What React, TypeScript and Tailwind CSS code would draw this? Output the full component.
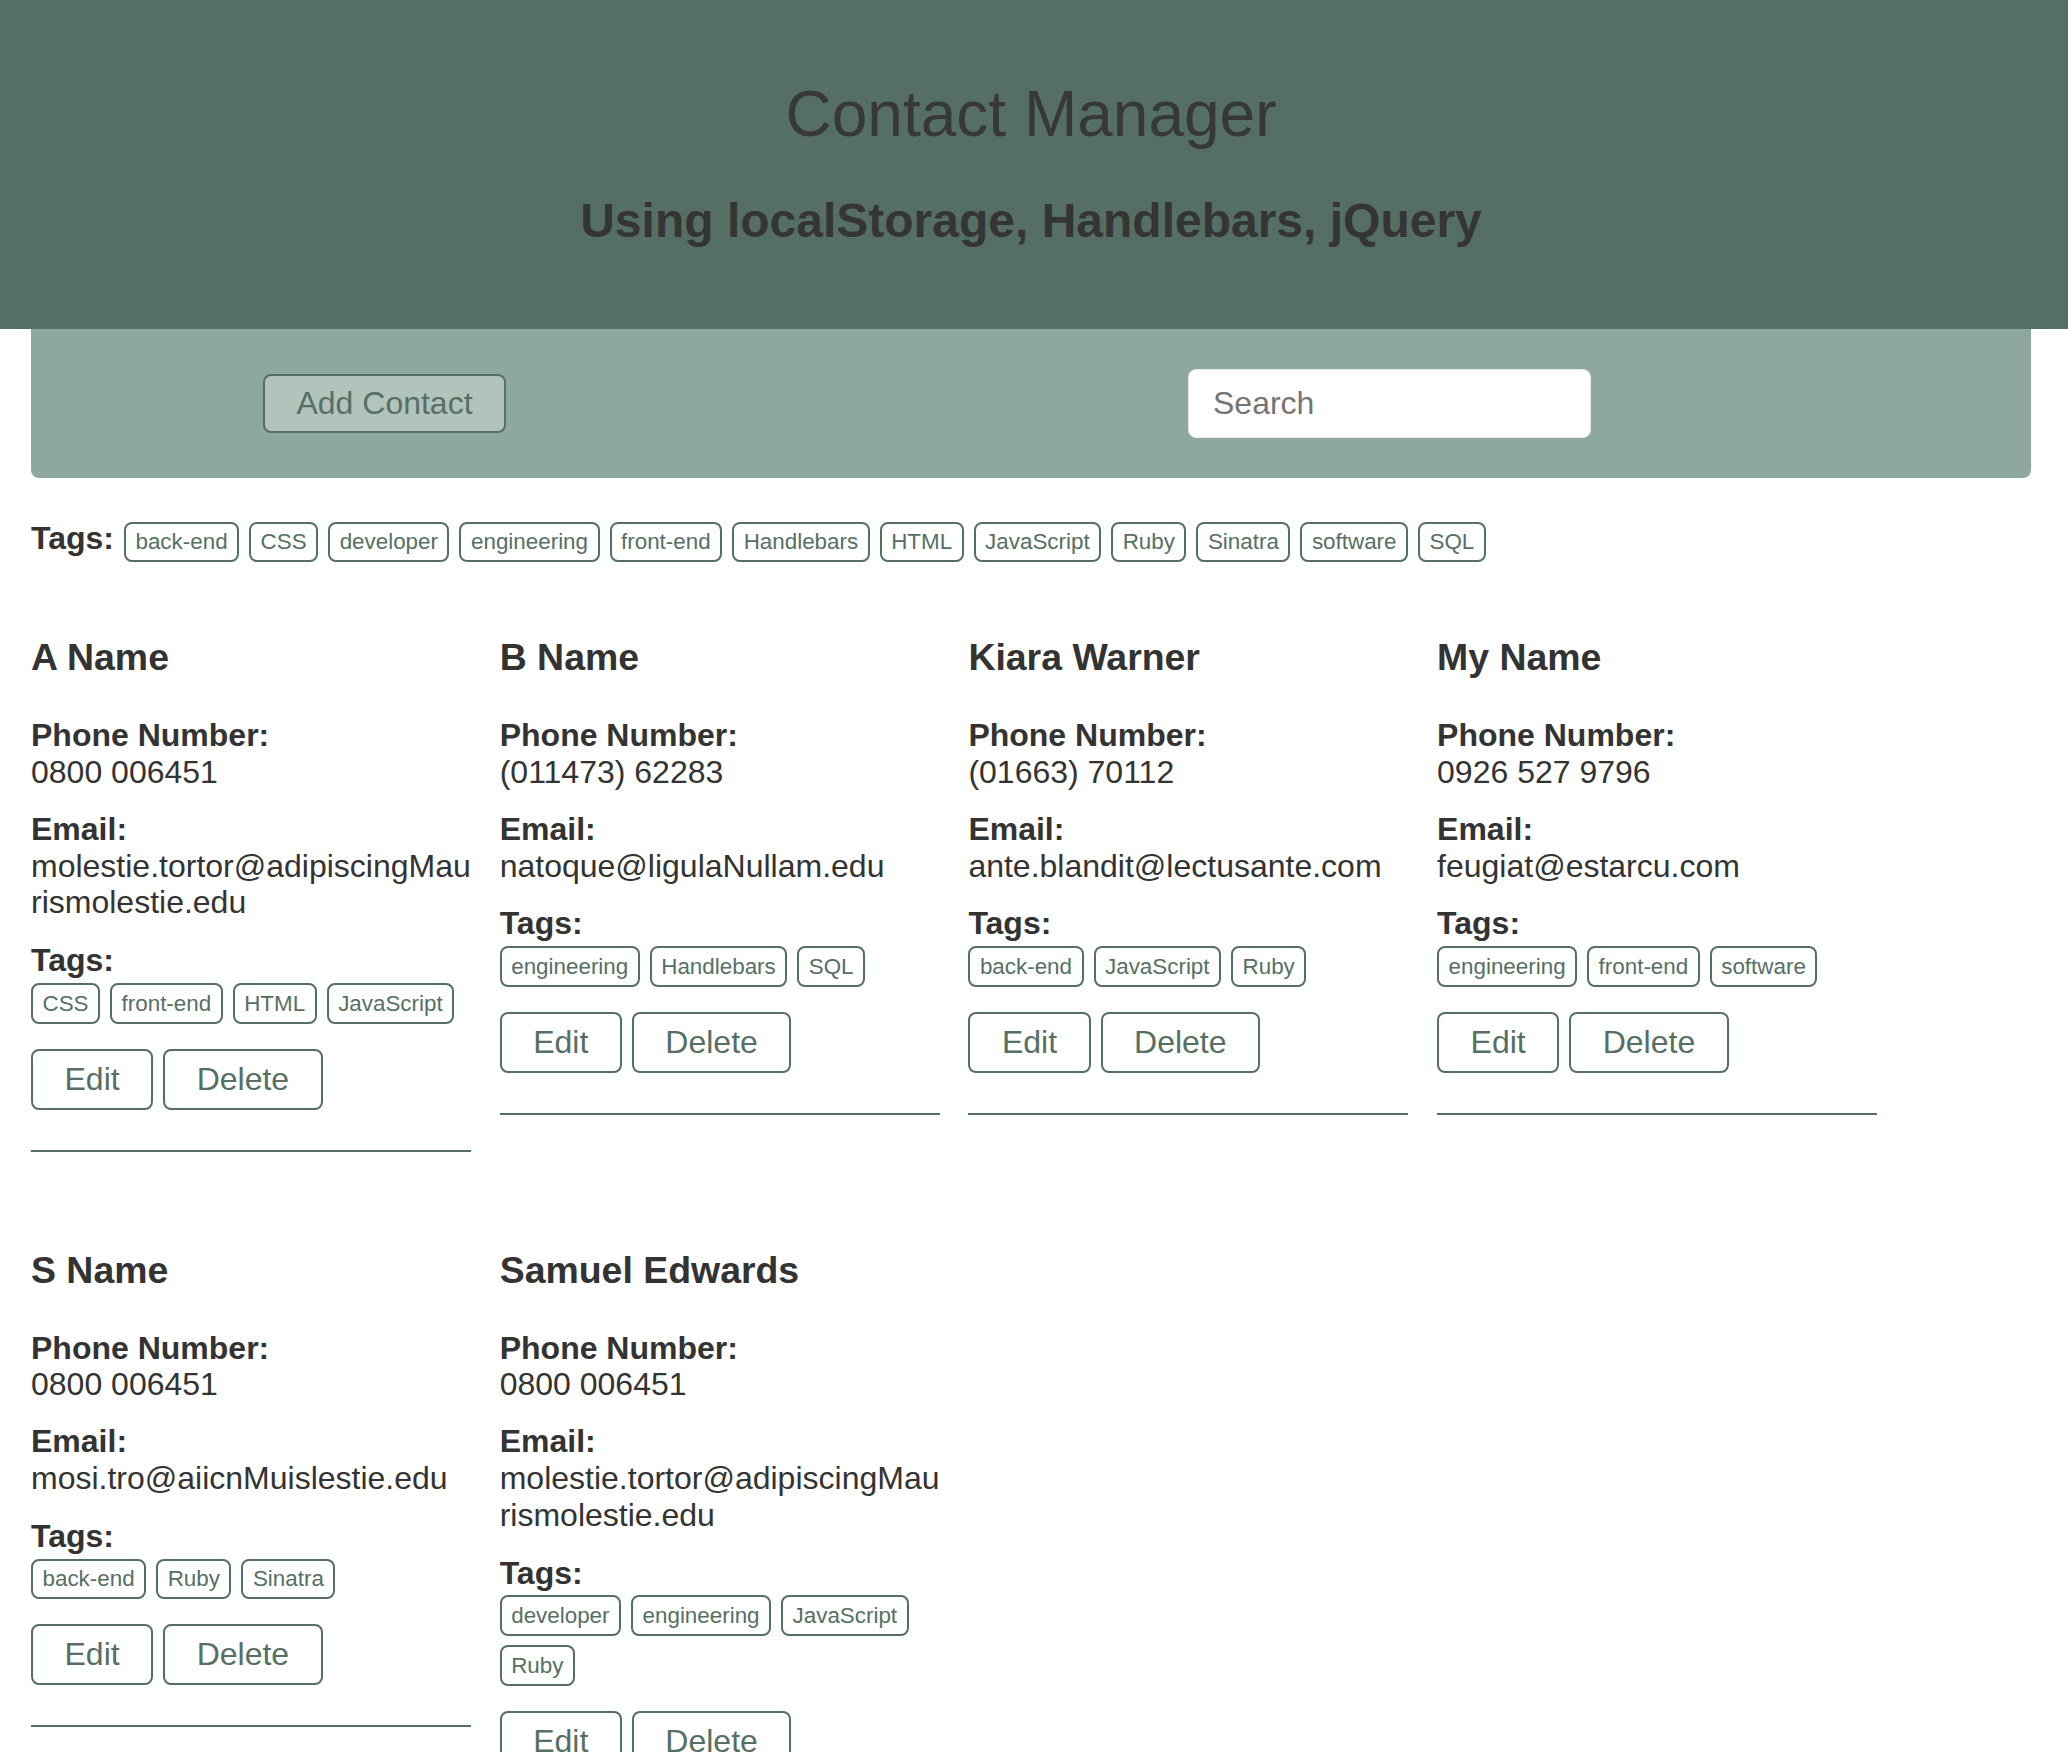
import React from 'react';

interface Contact {
  id: number;
  name: string;
  phone: string;
  email: string;
  tags: string[];
}

const allTags = [
  "back-end",
  "CSS",
  "developer",
  "engineering",
  "front-end",
  "Handlebars",
  "HTML",
  "JavaScript",
  "Ruby",
  "Sinatra",
  "software",
  "SQL",
];

const contacts: Contact[] = [
  {
    id: 1,
    name: "A Name",
    phone: "0800 006451",
    email: "molestie.tortor@adipiscingMaurismolestie.edu",
    tags: ["CSS", "front-end", "HTML", "JavaScript"],
  },
  {
    id: 2,
    name: "B Name",
    phone: "(011473) 62283",
    email: "natoque@ligulaNullam.edu",
    tags: ["engineering", "Handlebars", "SQL"],
  },
  {
    id: 3,
    name: "Kiara Warner",
    phone: "(01663) 70112",
    email: "ante.blandit@lectusante.com",
    tags: ["back-end", "JavaScript", "Ruby"],
  },
  {
    id: 4,
    name: "My Name",
    phone: "0926 527 9796",
    email: "feugiat@estarcu.com",
    tags: ["engineering", "front-end", "software"],
  },
  {
    id: 5,
    name: "S Name",
    phone: "0800 006451",
    email: "mosi.tro@aiicnMuislestie.edu",
    tags: ["back-end", "Ruby", "Sinatra"],
  },
  {
    id: 6,
    name: "Samuel Edwards",
    phone: "0800 006451",
    email: "molestie.tortor@adipiscingMaurismolestie.edu",
    tags: ["developer", "engineering", "JavaScript", "Ruby"],
  },
];

const Tag = ({ label }: { label: string }) => (
  <span className="inline-block rounded-[8px] border-2 border-[#566f65] bg-white px-[9.5px] py-[5.5px] text-[22.4px] leading-[25.76px] text-[#566f65]">
    {label}
  </span>
);

const CardButton = ({ label }: { label: string }) => (
  <button className="rounded-[8px] border-2 border-[#566f65] bg-white px-[31.5px] py-[10px] text-[32px] leading-[36.8px] text-[#566f65]">
    {label}
  </button>
);

const ContactCard = ({ contact }: { contact: Contact }) => (
  <div className="w-[440px]">
    <h3 className="text-[37.44px] font-bold leading-[43px]">{contact.name}</h3>
    <div className="mt-[38px]">
      <div className="font-bold">Phone Number:</div>
      <div>{contact.phone}</div>
    </div>
    <div className="mt-[20px]">
      <div className="font-bold">Email:</div>
      <div className="break-words">{contact.email}</div>
    </div>
    <div className="mt-[21px] font-bold">Tags:</div>
    <div className="mt-[4px] flex flex-wrap gap-x-[10px] gap-y-[9.3px]">
      {contact.tags.map((t) => (
        <Tag key={t} label={t} />
      ))}
    </div>
    <div className="mt-[25px] flex gap-[10px]">
      <CardButton label="Edit" />
      <CardButton label="Delete" />
    </div>
    <hr className="mt-[40px] border-t-2 border-[#566f65]" />
  </div>
);

const App = () => {
  return (
    <div className="min-h-screen bg-white font-['Liberation_Sans',Arial,sans-serif] text-[32px] leading-[36.8px] text-[#333]">
      <header className="h-[329px] bg-[#566f64] pt-[78px]">
        <div className="ml-[31px] w-[2000px] text-center">
          <h1 className="text-[64px] font-normal leading-[73.6px] text-[#383838]">Contact Manager</h1>
          <h2 className="mt-[41px] text-[48px] font-bold leading-[55.2px] text-[#353535]">
            Using localStorage, Handlebars, jQuery
          </h2>
        </div>
      </header>

      <main className="ml-[31px] w-[2000px]">
        <div className="flex h-[149px] items-center rounded-b-[8px] bg-[#8fa89d] pl-[232px]">
          <button className="w-[243px] rounded-[8px] border-2 border-[#566f65] bg-[#b1c3bb] py-[9.3px] text-[32px] leading-[36.8px] text-[#566f65]">
            Add Contact
          </button>
          <input
            type="text"
            placeholder="Search"
            className="ml-[682px] h-[69px] w-[403px] rounded-[8px] border border-[#e8e8e8] bg-white px-[24px] text-[32px] text-[#333] outline-none placeholder:text-[#757575]"
          />
        </div>

        <div className="mt-[42px] flex flex-wrap items-baseline gap-[10px]">
          <span className="font-bold">Tags:</span>
          {allTags.map((t) => (
            <Tag key={t} label={t} />
          ))}
        </div>

        <div className="mt-[74px] flex flex-wrap items-start gap-x-[28.7px] gap-y-[97px] pb-[40px]">
          {contacts.map((c) => (
            <ContactCard key={c.id} contact={c} />
          ))}
        </div>
      </main>
    </div>
  );
};

export default App;
